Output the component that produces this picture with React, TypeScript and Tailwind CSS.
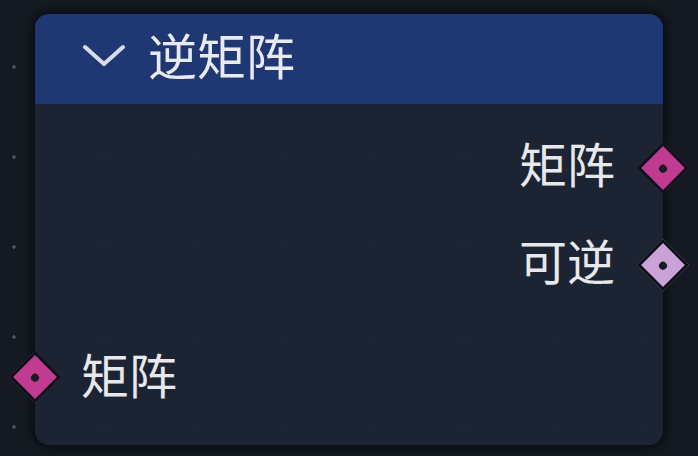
const cjk = "font-['Noto_Sans_CJK_SC','Noto_Sans',sans-serif]";

function Socket({ color, side, top }: { color: string; side: 'left' | 'right'; top: string }) {
  return (
    <div
      className={`absolute ${top} -translate-y-1/2 ${side === 'left' ? 'left-0 -translate-x-1/2' : 'right-0 translate-x-1/2'}`}
    >
      <div className={`w-[37px] h-[37px] rotate-45 border-[3px] border-[#0c1018] flex items-center justify-center ${color}`}>
        <div className="w-[8px] h-[8px] rounded-full bg-[#1a1b26]" />
      </div>
    </div>
  );
}

export default function App() {
  return (
    <div className="w-[698px] h-[456px] overflow-hidden bg-[#151a22] bg-[radial-gradient(circle,#4a515c_1.5px,transparent_2px)] bg-[length:90px_90px] bg-[position:-31px_22px] pt-[12px] pl-[33px]">
      <div className="relative w-[632px] h-[435px] rounded-[16px] border-2 border-[#0b0f17] shadow-[0_0_6px_2px_rgba(5,8,14,0.6)]">
        <div className="flex flex-col h-full rounded-[14px] overflow-hidden">
          {/* header */}
          <div className={`h-[90px] shrink-0 bg-[#203a78]/95 flex items-center pl-[47px] text-[#e8eaef] ${cjk}`}>
            <svg width="44" height="24" viewBox="0 0 44 24" className="mb-[6px]">
              <path d="M3 3 L22 20 L41 3" fill="none" stroke="#d9dde6" strokeWidth="4" strokeLinecap="round" strokeLinejoin="round" />
            </svg>
            <span className="ml-[22px] text-[49px] leading-none -mt-[12px]">逆矩阵</span>
          </div>
          {/* body */}
          <div className={`flex-1 bg-[#1c2434]/95 pt-[9px] text-[#e6e8ec] ${cjk}`}>
            <div className="h-[97px] flex items-center justify-end pr-[48px]">
              <span className="text-[48px] leading-none">矩阵</span>
            </div>
            <div className="h-[97px] flex items-center justify-end pr-[48px]">
              <span className="text-[48px] leading-none">可逆</span>
            </div>
            <div className="h-[97px] mt-[17px] flex items-center pl-[46px]">
              <span className="text-[48px] leading-none">矩阵</span>
            </div>
          </div>
        </div>
        {/* sockets */}
        <Socket color="bg-[#c13b90]" side="right" top="top-[154px]" />
        <Socket color="bg-[#cba2d8]" side="right" top="top-[251px]" />
        <Socket color="bg-[#c13b90]" side="left" top="top-[363px]" />
      </div>
    </div>
  );
}
